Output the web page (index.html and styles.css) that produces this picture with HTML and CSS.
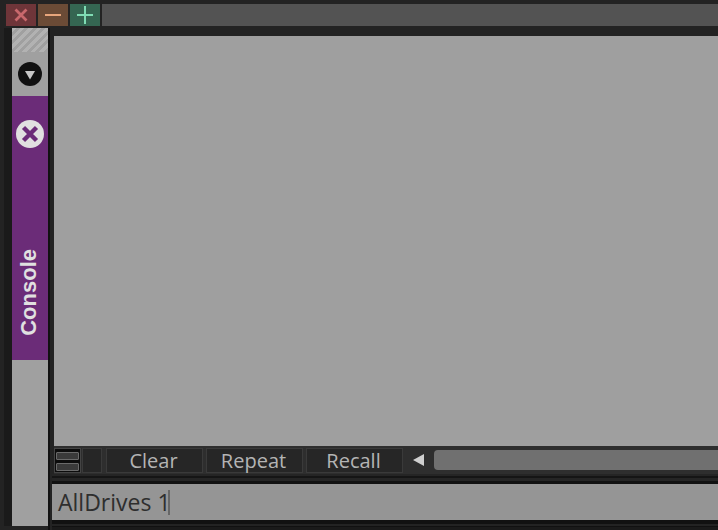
FILE: index.html
```html
<!DOCTYPE html>
<html lang="en">
<head>
    <meta charset="UTF-8">
    <title>Console</title>
    <link rel="stylesheet" href="styles.css">
</head>
<body>

    <div class="topbar">
        <div class="winbtn close">
            <svg width="16" height="16" viewBox="0 0 16 16"><path d="M2.5 2.5L13.5 13.5M13.5 2.5L2.5 13.5" stroke="#c9686c" stroke-width="2.8"/></svg>
        </div>
        <div class="winbtn min">
            <svg width="18" height="16" viewBox="0 0 18 16"><path d="M1 8H17" stroke="#e8a67c" stroke-width="2"/></svg>
        </div>
        <div class="winbtn max">
            <svg width="18" height="18" viewBox="0 0 18 18"><path d="M1 9H17M9 0V18" stroke="#7fdcb4" stroke-width="2"/></svg>
        </div>
        <div class="titlefill"></div>
    </div>

    <div class="content">
        <div class="sidebar">
            <div class="hatch"></div>
            <div class="dropzone">
                <svg width="24" height="24" viewBox="0 0 24 24">
                    <circle cx="12" cy="12" r="12" fill="#111"/>
                    <path d="M7 9H17L12 17.5Z" fill="#c8c8c8"/>
                </svg>
            </div>
            <div class="tab">
                <svg class="tabclose" width="28" height="28" viewBox="0 0 28 28">
                    <circle cx="14" cy="14" r="14" fill="#e0e0e0"/>
                    <path d="M7.5 7.5L20.5 20.5M20.5 7.5L7.5 20.5" stroke="#6b2c78" stroke-width="4.4"/>
                </svg>
                <div class="tablabel">Console</div>
            </div>
            <div class="sidefill"></div>
        </div>

        <div class="main">
            <div class="output"></div>
            <div class="toolbar">
                <div class="menubtn">
                    <div class="menuline"></div>
                    <div class="menuline"></div>
                </div>
                <div class="blank"></div>
                <div class="tool">Clear</div>
                <div class="tool">Repeat</div>
                <div class="tool">Recall</div>
                <div class="arrow"></div>
                <div class="thumb"></div>
            </div>
            <div class="divider"></div>
            <div class="inputline">
                <span>AllDrives 1</span><span class="caret"></span>
            </div>
            <div class="footer"></div>
        </div>
    </div>

</body>
</html>
```

FILE: styles.css
```css
html, body {
    height: 100%;
}
body {
    margin: 0;
    background-color: #232323;
    overflow: hidden;
    display: flex;
    flex-direction: column;
    font-family: "Open Sans", sans-serif;
}

/*TOP BAR*/
.topbar {
    display: flex;
    gap: 2px;
    height: 22px;
    padding: 4px 0 2px 6px;
}
.winbtn {
    width: 30px;
    display: flex;
    align-items: center;
    justify-content: center;
}
.close {
    background-color: #6e3539;
}
.min {
    background-color: #6b4b36;
}
.max {
    background-color: #356652;
}
.titlefill {
    flex: 1;
    background-color: #535353;
}

/*LAYOUT*/
.content {
    flex: 1;
    display: flex;
    padding-left: 4px;
    min-height: 0;
}

/*SIDEBAR*/
.sidebar {
    width: 36px;
    border-left: 8px solid #1a1a1a;
    margin-bottom: 4px;
    display: flex;
    flex-direction: column;
    background-color: #a0a0a0;
}
.hatch {
    height: 24px;
    background: repeating-linear-gradient(135deg, #b2b2b2 0 3px, #a0a0a0 3px 6px);
}
.dropzone {
    height: 44px;
    display: flex;
    align-items: center;
    justify-content: center;
}
.tab {
    height: 264px;
    background-color: #6b2c78;
    display: flex;
    flex-direction: column;
    align-items: center;
    padding-top: 24px;
    box-sizing: border-box;
}
.tablabel {
    writing-mode: vertical-rl;
    transform: rotate(180deg);
    margin-top: 101px;
    margin-right: 2px;
    font-family: "Liberation Sans", sans-serif;
    font-weight: bold;
    font-size: 22px;
    color: #e0e0e0;
}
.sidefill {
    flex: 1;
}

/*CONSOLE*/
.main {
    flex: 1;
    min-width: 0;
    padding-top: 8px;
    display: flex;
    flex-direction: column;
    border-left: 2px solid #111;
}
.output {
    height: 410px;
    margin-left: 4px;
    background-color: #9f9f9f;
}
.toolbar {
    height: 28px;
    margin-left: 4px;
    background-color: #2e2e2e;
    display: flex;
    align-items: center;
    gap: 4px;
    box-sizing: border-box;
}
.menubtn {
    width: 27px;
    height: 25px;
    box-sizing: border-box;
    background-color: #0c0c0c;
    border: 1px solid #444;
    display: flex;
    flex-direction: column;
    justify-content: space-between;
    padding: 3px 1px 1px 1px;
    margin-right: -3px;
}
.menuline {
    height: 8px;
    box-sizing: border-box;
    background-color: #3a3a3a;
    border: 1px solid #6a6a6a;
    border-radius: 1px;
}
.blank {
    width: 20px;
    height: 25px;
    background-color: #262626;
    border: 1px solid #3a3a3a;
    box-sizing: border-box;
}
.tool {
    width: 97px;
    height: 25px;
    box-sizing: border-box;
    background-color: #262626;
    border: 1px solid #3a3a3a;
    color: #b4b4b4;
    font-size: 20px;
    line-height: 23px;
    text-align: center;
    padding-right: 2px;
    margin-right: -1px;
}
.arrow {
    width: 0;
    height: 0;
    margin-left: 7px;
    border-top: 6px solid transparent;
    border-bottom: 6px solid transparent;
    border-right: 11px solid #cfcfcf;
}
.thumb {
    flex: 1;
    height: 20px;
    margin-left: 6px;
    background-color: #707070;
    border-radius: 4px 0 0 4px;
}
.divider {
    height: 10px;
    margin-left: 2px;
    background: linear-gradient(#252525 0 2px, #151515 2px 4px, #252525 4px 7px, #111 7px);
}
.inputline {
    height: 36px;
    margin-left: 2px;
    display: flex;
    align-items: center;
    padding-left: 6px;
    background-color: #959595;
    color: #2e2e2e;
    font-size: 23px;
}
.caret {
    width: 2px;
    height: 25px;
    margin-left: -3px;
    background-color: #666;
}
.footer {
    flex: 1;
    margin-left: 2px;
    background: linear-gradient(#111 0 4px, #232323 4px 6px, #111 6px 7px, #1a1a1a 7px);
}
```
